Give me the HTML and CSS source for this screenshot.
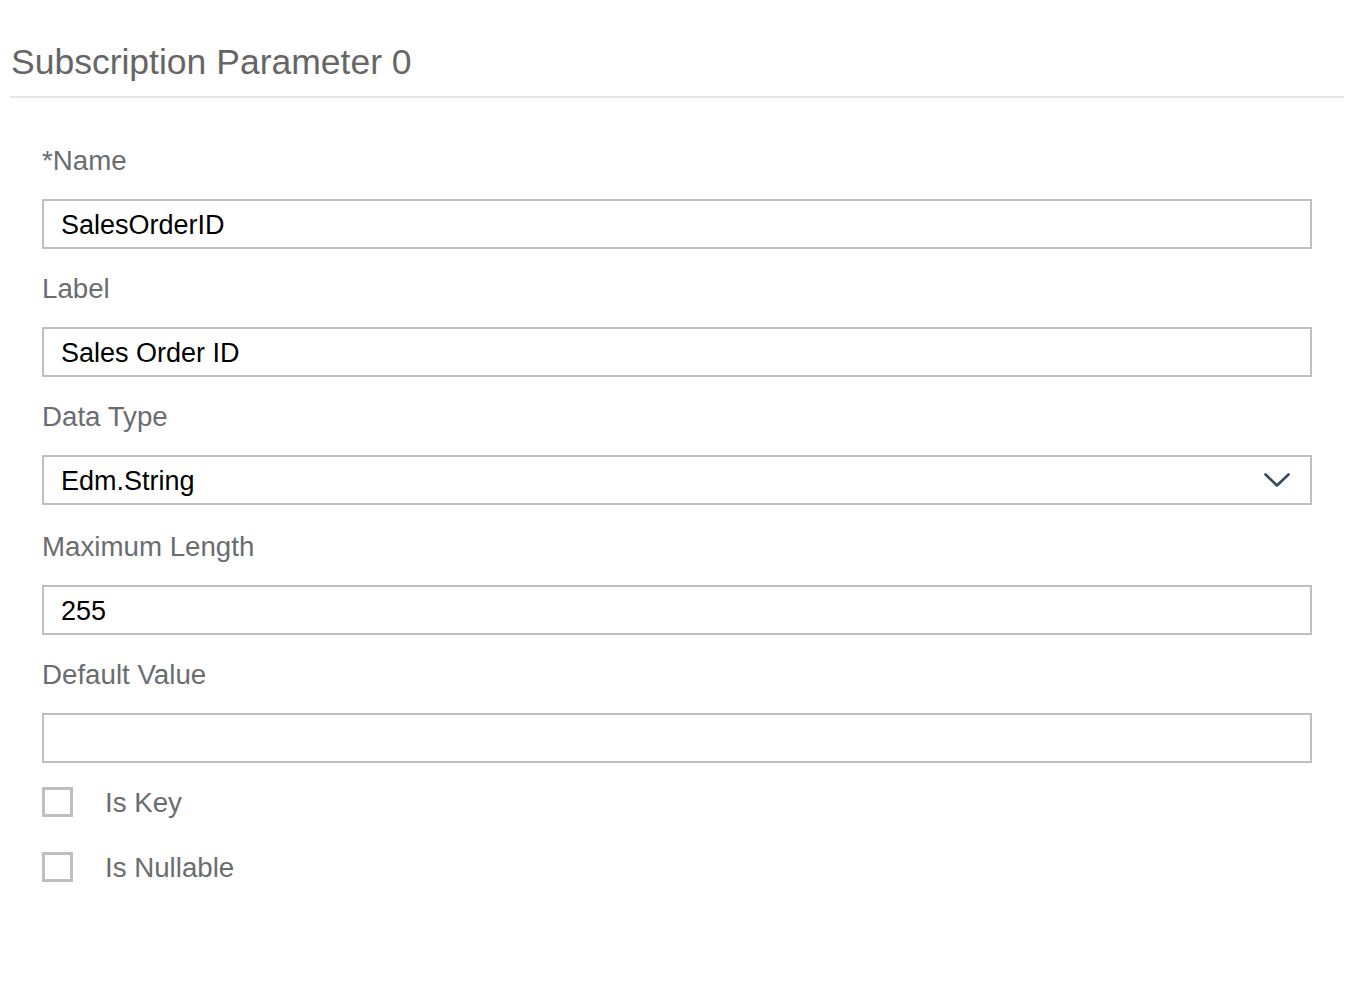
FILE: index.html
```html
<!DOCTYPE html>
<html lang="en">
<head>
<meta charset="utf-8">
<title>Subscription Parameter 0</title>
<link rel="stylesheet" href="styles.css">
</head>
<body>
<header class="header">
  <h1 class="title">Subscription Parameter 0</h1>
</header>
<form class="form">
  <div class="field">
    <label class="label">*Name</label>
    <div class="input"><span class="value">SalesOrderID</span></div>
  </div>
  <div class="field">
    <label class="label">Label</label>
    <div class="input"><span class="value">Sales Order ID</span></div>
  </div>
  <div class="field field-select">
    <label class="label">Data Type</label>
    <div class="input select">
      <span class="value">Edm.String</span>
      <svg class="chevron" width="26" height="15" viewBox="0 0 26 15"><path d="M1.5 1.5 L13 12.5 L24.5 1.5" fill="none" stroke="#354a5f" stroke-width="2.6" stroke-linecap="round" stroke-linejoin="round"/></svg>
    </div>
  </div>
  <div class="field">
    <label class="label">Maximum Length</label>
    <div class="input"><span class="value">255</span></div>
  </div>
  <div class="field">
    <label class="label">Default Value</label>
    <div class="input"><span class="value"></span></div>
  </div>
  <div class="checks">
    <div class="check"><span class="box"></span><span class="check-label">Is Key</span></div>
    <div class="check"><span class="box"></span><span class="check-label">Is Nullable</span></div>
  </div>
</form>
</body>
</html>
```
FILE: styles.css
```css
html, body {
  margin: 0;
  padding: 0;
  background: #ffffff;
}
body {
  font-family: "Liberation Sans", Arial, sans-serif;
  width: 1362px;
}
.header {
  margin: 0 18px 0 10px;
  padding: 42px 0 14px 1px;
  border-bottom: 2px solid #e5e5e5;
}
.title {
  margin: 0;
  font-size: 35.5px;
  line-height: 40px;
  font-weight: normal;
  color: #666666;
}
.form {
  padding: 48px 50px 0 42px;
  display: flex;
  flex-direction: column;
}
.field {
  display: flex;
  flex-direction: column;
  padding-bottom: 25px;
}
.field-select {
  padding-bottom: 27px;
}
.label {
  display: block;
  height: 30px;
  font-size: 27.7px;
  line-height: 30px;
  color: #6a6d70;
  margin-bottom: 23px;
}
.input {
  box-sizing: border-box;
  height: 50px;
  border: 2px solid #bfbfbf;
  background: #ffffff;
  display: flex;
  align-items: center;
  padding: 0 20px 0 17px;
}
.value {
  font-size: 27px;
  line-height: 32px;
  color: #000000;
  flex: 1;
  padding-top: 2px;
}
.chevron {
  display: block;
  margin-top: 1px;
}
.checks {
  display: flex;
  flex-direction: column;
  margin-top: -19px;
}
.check {
  height: 65px;
  display: flex;
  align-items: center;
}
.box {
  box-sizing: border-box;
  width: 31px;
  height: 30px;
  border: 3px solid #bfbfbf;
  background: #ffffff;
  margin-right: 32px;
}
.check-label {
  font-size: 27.7px;
  line-height: 32px;
  color: #6a6d70;
  padding-top: 2px;
}
```
